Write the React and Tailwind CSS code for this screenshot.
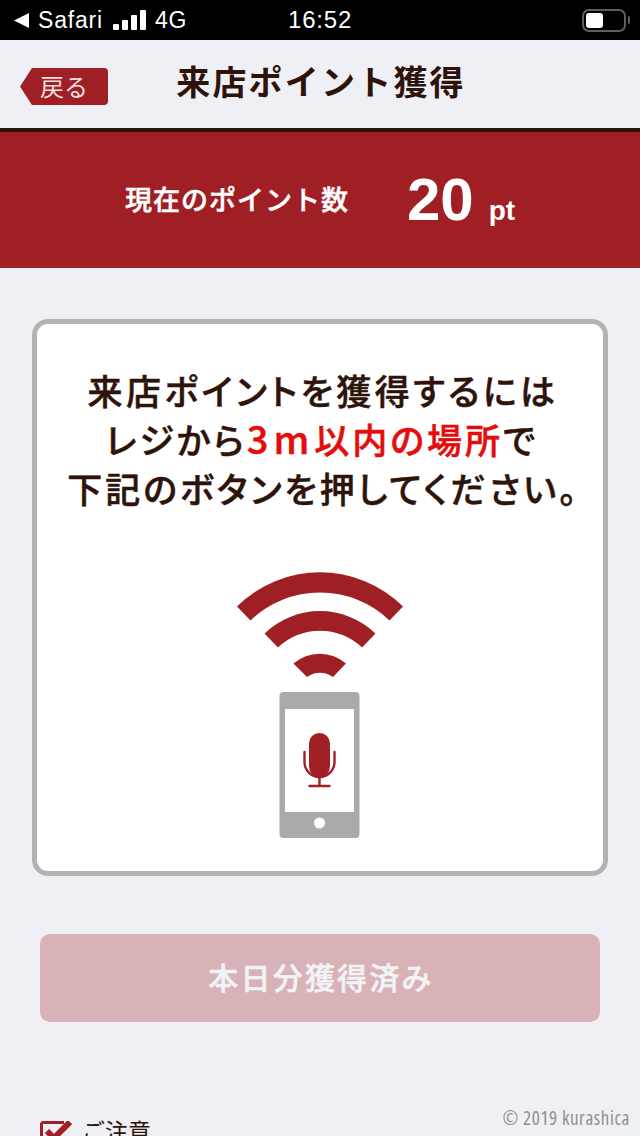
const sans = { fontFamily: '"Liberation Sans", "Noto Sans CJK JP", sans-serif' };

function Wifi() {
  return (
    <svg width="200" height="290" viewBox="0 0 200 290" className="block">
      <path d="M17 46.500 A118 118 0 0 1 183 46.500 L169.500 60.500 A100 100 0 0 0 30.500 60.500 Z" fill="#a01f25" />
      <path d="M44.500 73.500 A80 80 0 0 1 155.500 73.500 L142 87.500 A61 61 0 0 0 58 87.500 Z" fill="#a01f25" />
      <path d="M73.500 103.500 A40 40 0 0 1 126 103.500 L113 117 A22 22 0 0 0 87 117 Z" fill="#a01f25" />
      <rect x="59.500" y="132" width="80" height="146" rx="4" fill="#aaaaaa" />
      <rect x="65" y="149" width="69" height="103" fill="#fff" />
      <circle cx="99.500" cy="263" r="5.500" fill="#fff" />
      <rect x="89" y="173" width="21" height="44" rx="10.500" fill="#a01f25" />
      <path d="M84.500 192 V202 A15 15 0 0 0 114.500 202 V192" fill="none" stroke="#a01f25" strokeWidth="2.400" strokeLinecap="round" />
      <path d="M99.500 217 V226 M89.500 226 H109.500" fill="none" stroke="#a01f25" strokeWidth="2.400" strokeLinecap="round" />
    </svg>
  );
}

function Check() {
  return (
    <svg width="32" height="20" viewBox="0 0 32 20" className="block">
      <path d="M1.500 1.500 H24 M1.500 1.500 V20" stroke="#a01f25" strokeWidth="3" fill="none" />
      <path d="M7 10 L14 17 L30 1" stroke="#a01f25" strokeWidth="6" fill="none" />
    </svg>
  );
}

export default function App() {
  return (
    <div className="relative w-[640px] h-[1136px] overflow-hidden bg-[#eff0f5]" style={sans}>
      <div className="h-10 bg-black text-white flex items-center justify-between pl-[14px] pr-[10px] text-[23px] relative">
        <div className="flex items-center">
          <svg width="16" height="15" viewBox="0 0 16 15" className="block"><path d="M0 7.500 L15 0 V15 Z" fill="#fff" /></svg>
          <span className="ml-2 tracking-[0.8px]">Safari</span>
          <div className="flex items-end gap-[3px] ml-[10px] h-5">
            <span className="w-[6px] h-[6px] rounded-[1px] bg-white"></span>
            <span className="w-[6px] h-[10px] rounded-[1px] bg-white"></span>
            <span className="w-[6px] h-[15px] rounded-[1px] bg-white"></span>
            <span className="w-[6px] h-[20px] rounded-[1px] bg-white"></span>
          </div>
          <span className="ml-[9px] tracking-[0.8px]">4G</span>
        </div>
        <span className="absolute left-[288px] top-[6px] text-[24px] leading-[28px] tracking-[0.8px]">16:52</span>
        <div className="flex items-center">
          <div className="w-[44px] h-[23px] rounded-[7px] border-2 border-[#5e5e5e] p-[2px]">
            <div className="w-[17px] h-[15px] rounded-[3px] bg-white"></div>
          </div>
          <span className="w-[2px] h-[8px] ml-[2px] bg-[#5e5e5e] rounded-r-[2px]"></span>
        </div>
      </div>

      <div className="h-[92px] border-b-4 border-[#2e130a] relative flex items-center justify-center pb-[3px]">
        <div className="absolute left-[20px] top-[28px] w-[88px] h-[37px] flex items-center justify-center pt-[2px] text-[24px] text-[#f3dfdf] bg-[#a01f25] rounded-r-[4px] [clip-path:polygon(12px_0,100%_0,100%_100%,12px_100%,0_50%)]">戻る</div>
        <h1 className="ml-[2px] text-[34px] leading-none font-bold text-[#2e130a] tracking-[2.2px]">来店ポイント獲得</h1>
      </div>

      <div className="h-[136px] bg-[#a01f25] text-white flex items-center">
        <span className="ml-[125px] mt-[2px] w-[224px] text-[27px] font-medium [-webkit-text-stroke:0.5px_#ffffff] tracking-[1px] whitespace-nowrap">現在のポイント数</span>
        <span className="ml-[58px] text-[60px] leading-none font-bold">20</span>
        <span className="ml-[15px] mt-[22px] text-[28px] leading-none font-bold">pt</span>
      </div>

      <div className="mt-[51px] mx-[32px] h-[557px] rounded-[16px] border-[5px] border-[#b3b3b3] bg-white flex flex-col items-center pt-[41px]">
        <div className="flex flex-col items-center text-[35px] leading-[49px] font-medium [-webkit-text-stroke:0.5px] text-[#2e130a] whitespace-nowrap [font-family:'Noto_Sans_CJK_JP',sans-serif] [font-feature-settings:'palt']">
          <p className="ml-[6px] tracking-[3.4px]">来店ポイントを獲得するには</p>
          <p className="ml-[4px] tracking-[3px]">レジから<span className="text-[#e50c0c]"><span className="text-[38px] leading-none tracking-[5px]">3m</span>以内の場所</span>で</p>
          <p className="ml-[7px] tracking-[3px]">下記のボタンを押してください。</p>
        </div>
        <div className="mt-[48px]"><Wifi /></div>
      </div>

      <div className="mt-[58px] mx-[40px] h-[88px] rounded-[10px] bg-[#d8b2b7] flex items-center justify-center text-[30px] font-medium [-webkit-text-stroke:0.5px] text-[#f2f3f7] tracking-[2.2px] pl-[2px]">本日分獲得済み</div>

      <div className="absolute left-[40px] top-[1121px] flex items-start gap-[10px]">
        <Check />
        <span className="text-[23px] leading-none text-[#2e130a]">ご注意</span>
      </div>
      <span className="absolute right-[10px] top-[1109px] text-[19px] leading-none text-[#8f8f8f] whitespace-nowrap tracking-[0.6px]" style={{fontFamily:'"Open Sans", sans-serif', fontStretch:'condensed'}}>© 2019 kurashica</span>
    </div>
  );
}
